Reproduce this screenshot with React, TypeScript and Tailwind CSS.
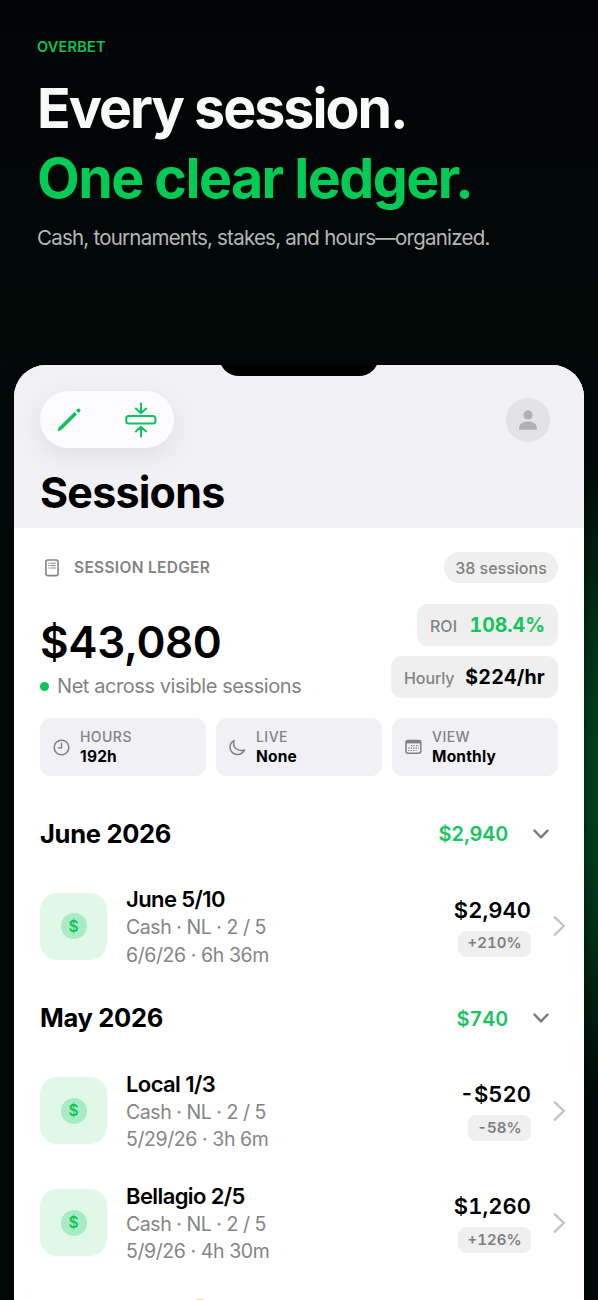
import React from "react";

type Session = {
  title: string;
  stakes: string;
  date: string;
  amount: string;
  roi: string;
};

type Month = {
  name: string;
  total: string;
  sessions: Session[];
};

const months: Month[] = [
  {
    name: "June 2026",
    total: "$2,940",
    sessions: [
      {
        title: "June 5/10",
        stakes: "Cash · NL · 2 / 5",
        date: "6/6/26 · 6h 36m",
        amount: "$2,940",
        roi: "+210%",
      },
    ],
  },
  {
    name: "May 2026",
    total: "$740",
    sessions: [
      {
        title: "Local 1/3",
        stakes: "Cash · NL · 2 / 5",
        date: "5/29/26 · 3h 6m",
        amount: "-$520",
        roi: "-58%",
      },
      {
        title: "Bellagio 2/5",
        stakes: "Cash · NL · 2 / 5",
        date: "5/9/26 · 4h 30m",
        amount: "$1,260",
        roi: "+126%",
      },
    ],
  },
];

const PencilIcon = () => (
  <svg width="24" height="24" viewBox="0 0 24 24" fill="#0ec25c">
    <path d="M1 22.8 L2.2 19.4 L17.4 4.4 L19.5 6.5 L4.3 21.4 Z" stroke="#0ec25c" strokeWidth="0.9" strokeLinejoin="round" />
    <circle cx="21.4" cy="2.5" r="2" />
  </svg>
);

const CollapseIcon = () => (
  <svg width="32" height="36" viewBox="0 0 32 36" fill="none" stroke="#0ec25c" strokeWidth="2" strokeLinecap="round" strokeLinejoin="round">
    <rect x="1.2" y="14" width="29.2" height="7.6" rx="2.6" />
    <path d="M16 1.6 V11 M10.8 6.6 L16 11.2 L21.2 6.6" />
    <path d="M16 34.4 V25 M10.8 29.4 L16 24.8 L21.2 29.4" />
  </svg>
);

const PersonIcon = () => (
  <svg width="18" height="20" viewBox="0 0 18 20" fill="#b0b0b6">
    <circle cx="9" cy="4.9" r="4.6" />
    <path d="M0 18.2 C0 14.2 4 11.6 9 11.6 S18 14.2 18 18.2 Q18 19.7 16.8 19.7 H1.2 Q0 19.7 0 18.2 Z" />
  </svg>
);

const LedgerIcon = () => (
  <svg width="14" height="18" viewBox="0 0 14 18" fill="none" stroke="#838383" strokeWidth="1.6">
    <rect x="0.9" y="1" width="12.2" height="15.6" rx="2" />
    <path d="M3.2 4.2 h1.2 M5.4 4.2 h5.4 M3.2 6.6 h1.2 M5.4 6.6 h5.4 M3.2 9 h1.2 M5.4 9 h5.4" strokeWidth="1" />
  </svg>
);

const ClockIcon = () => (
  <svg width="17" height="17" viewBox="0 0 17 17" fill="none" stroke="#7f7f83" strokeWidth="1.5" strokeLinecap="round">
    <circle cx="8.5" cy="8.5" r="7.3" />
    <path d="M8.5 4.2 V8.8 H5" strokeWidth="1.3" />
  </svg>
);

const MoonIcon = () => (
  <svg width="17" height="17" viewBox="0 0 17 17" fill="none" stroke="#7f7f83" strokeWidth="1.5" strokeLinejoin="round">
    <path d="M5.2 1.6 C2.4 2.8 1 5.3 1 8.1 C1 12.3 4.3 15.5 8.4 15.5 C11.6 15.5 14.3 13.8 15.5 10.9 C14.4 11.3 13.3 11.5 12.2 11.5 C7.7 11.5 4.8 8.6 4.6 4.6 C4.6 3.5 4.8 2.5 5.2 1.6 Z" />
  </svg>
);

const CalendarIcon = () => (
  <svg width="17" height="16" viewBox="0 0 17 16" fill="none" stroke="#7f7f83">
    <rect x="1" y="1.4" width="14.8" height="12.8" rx="2" strokeWidth="1.5" />
    <path d="M1 3 H16" strokeWidth="2.8" />
    <path d="M6 6.7 H14 M3.2 9.1 H14 M3.2 11.5 H11.5" strokeWidth="1.2" strokeDasharray="1.3 1.2" />
  </svg>
);

const ChevronDown = () => (
  <svg width="16" height="10" viewBox="0 0 16 10" fill="none" stroke="#7c7c7c" strokeWidth="2.4" strokeLinecap="round" strokeLinejoin="round">
    <path d="M1.5 1.6 L8 8.3 L14.5 1.6" />
  </svg>
);

const ChevronRight = () => (
  <svg width="12" height="20" viewBox="0 0 12 20" fill="none" stroke="#c3c3c5" strokeWidth="2.4" strokeLinecap="round" strokeLinejoin="round">
    <path d="M1.9 1.4 L10.8 10 L1.9 18.6" />
  </svg>
);

const stats = [
  { label: "HOURS", value: "192h", icon: <ClockIcon /> },
  { label: "LIVE", value: "None", icon: <MoonIcon /> },
  { label: "VIEW", value: "Monthly", icon: <CalendarIcon /> },
];

const Hero: React.FC = () => (
  <header className="h-[365px] pl-[37px] pt-[37px] whitespace-nowrap">
    <p className="text-[14.5px] leading-5 font-semibold tracking-[0.015em] text-[#07c653]">OVERBET</p>
    <h1 className="mt-[16px] text-[55.5px] leading-[70px] font-bold text-[#f8fafa]">
      <span className="block tracking-[-0.036em]">Every session.</span>
      <span className="block tracking-[-0.028em] text-[#04cb55]">One clear ledger.</span>
    </h1>
    <p className="mt-[13px] text-[20.5px] leading-6 tracking-[-0.77px] text-[#b5b8b8]">
      Cash, tournaments, stakes, and hours—organized.
    </p>
  </header>
);

const TopBar: React.FC = () => (
  <div className="h-[163px] bg-[#f1f0f5] px-[26px] pt-[26px]">
    <div className="flex items-center justify-between">
      <div className="flex h-[57px] w-[134px] items-center justify-between rounded-full bg-[#fcfcfe] pl-[17px] pr-[17px] shadow-[0_8px_26px_rgba(0,0,0,0.07)]">
        <PencilIcon />
        <CollapseIcon />
      </div>
      <div className="mr-2 flex size-11 items-center justify-center rounded-full bg-[#e3e2e7]">
        <PersonIcon />
      </div>
    </div>
    <h2 className="mt-[18px] text-[43px] leading-[52px] font-bold tracking-[-0.8px] text-black">Sessions</h2>
  </div>
);

const Summary: React.FC = () => (
  <section className="px-[26px] pt-[24px]">
    <div className="flex h-[31px] items-center justify-between">
      <div className="flex items-center gap-[15px] pl-[5px]">
        <LedgerIcon />
        <span className="text-[15.5px] font-semibold tracking-[0.3px] text-[#838383]">SESSION LEDGER</span>
      </div>
      <span className="flex h-[31px] w-[114px] items-center justify-center rounded-full bg-[#efefef] text-[16px] font-medium text-[#7f7f7f]">
        38 sessions
      </span>
    </div>
    <div className="mt-[21px] flex h-[94px] justify-between">
      <div className="pt-[11px] whitespace-nowrap">
        <p className="text-[44px] leading-[54px] font-semibold tracking-[-0.35px] text-black">$43,080</p>
        <div className="mt-[5px] flex items-center gap-2">
          <span className="size-[9px] rounded-full bg-[#0ac559]" />
          <span className="text-[20px] leading-6 tracking-[-0.43px] text-[#838383]">Net across visible sessions</span>
        </div>
      </div>
      <div className="flex flex-col items-end gap-[10px] whitespace-nowrap">
        <div className="flex h-[42px] w-[141px] items-baseline justify-between rounded-[11px] bg-[#efefef] px-[13px] leading-[42px]">
          <span className="text-[16px] font-medium text-[#838383]">ROI</span>
          <span className="text-[19.5px] font-bold tabular-nums text-[#12c65b]">108.4%</span>
        </div>
        <div className="flex h-[42px] w-[167px] items-baseline justify-between rounded-[11px] bg-[#efefef] px-[13px] leading-[42px]">
          <span className="text-[16px] font-medium tracking-[-0.1px] text-[#838383]">Hourly</span>
          <span className="text-[19.5px] font-bold tracking-[0.2px] tabular-nums text-black">$224/hr</span>
        </div>
      </div>
    </div>
    <div className="mt-5 grid grid-cols-3 gap-[10px]">
      {stats.map((stat) => (
        <div key={stat.label} className="flex h-[58px] items-center gap-[10px] rounded-[11px] bg-[#f1f0f5] pl-[13px]">
          {stat.icon}
          <div className="leading-5">
            <p className="text-[14px] font-medium tracking-[0.45px] text-[#838386]">{stat.label}</p>
            <p className="text-[15.5px] font-bold tracking-[0.2px] text-black">{stat.value}</p>
          </div>
        </div>
      ))}
    </div>
  </section>
);

const SessionRow: React.FC<{ session: Session }> = ({ session }) => (
  <div className="flex h-[112px] items-center pr-[19px] pl-[26px] whitespace-nowrap">
    <div className="flex size-[67px] items-center justify-center rounded-[17px] bg-[#dff8e8]">
      <span className="flex size-[26px] items-center justify-center rounded-full bg-[#a9ebc4] pt-px text-[15.5px] font-semibold text-[#10c45c]">
        $
      </span>
    </div>
    <div className="ml-[19px] pt-[2px]">
      <p className="text-[22px] leading-[28px] font-semibold tracking-[-0.6px] text-black">{session.title}</p>
      <p className="mt-px text-[19.5px] leading-[27.5px] tracking-[-0.45px] text-[#858585]">{session.stakes}</p>
      <p className="text-[19.5px] leading-[27.5px] tracking-[-0.42px] text-[#858585]">{session.date}</p>
    </div>
    <div className="ml-auto flex flex-col items-end">
      <p className="text-[22px] leading-[28px] font-semibold tabular-nums text-black">{session.amount}</p>
      <span className="mt-[7px] flex h-[26px] items-center rounded-lg bg-[#efefef] px-[9.5px] text-[15px] font-semibold tabular-nums text-[#7f7f7f]">
        {session.roi}
      </span>
    </div>
    <div className="ml-[22px]">
      <ChevronRight />
    </div>
  </div>
);

const MonthGroup: React.FC<{ month: Month }> = ({ month }) => (
  <section>
    <div className="flex h-[72.5px] items-center pr-[35.5px] pl-[26px]">
      <h3 className="text-[25.5px] font-bold tracking-[-0.3px] text-black">{month.name}</h3>
      <span className="mr-[24.5px] ml-auto pt-px text-[20px] font-semibold tracking-[-0.1px] tabular-nums text-[#16c560]">{month.total}</span>
      <ChevronDown />
    </div>
    {month.sessions.map((session) => (
      <SessionRow key={session.title} session={session} />
    ))}
  </section>
);

export default function App() {
  return (
    <main className="h-[1300px] w-[598px] overflow-hidden bg-[radial-gradient(circle_320px_at_650px_780px,#004520_0%,#003c1b_35%,transparent_100%),linear-gradient(#020305_0%,#010a08_28%,#010a08_100%)] font-['Inter','Liberation_Sans',sans-serif]">
      <Hero />
      <div className="mx-[14px] h-[935px] rounded-t-[32px] shadow-[0_0_14px_rgba(0,0,0,0.6)]">
        <div className="relative h-full overflow-hidden rounded-t-[32px] bg-white">
          <div className="absolute top-[-24px] left-[205px] h-[35px] w-[160px] rounded-b-[20px] bg-black" />
          <TopBar />
          <Summary />
          <div className="mt-[21.5px]">
            {months.map((month) => (
              <MonthGroup key={month.name} month={month} />
            ))}
          </div>
          {/* next group's badge, just cut by the bottom edge */}
          <div className="absolute top-[933.5px] left-[172px] size-[28px] rounded-full bg-[#e8cf94]" />
        </div>
      </div>
    </main>
  );
}
